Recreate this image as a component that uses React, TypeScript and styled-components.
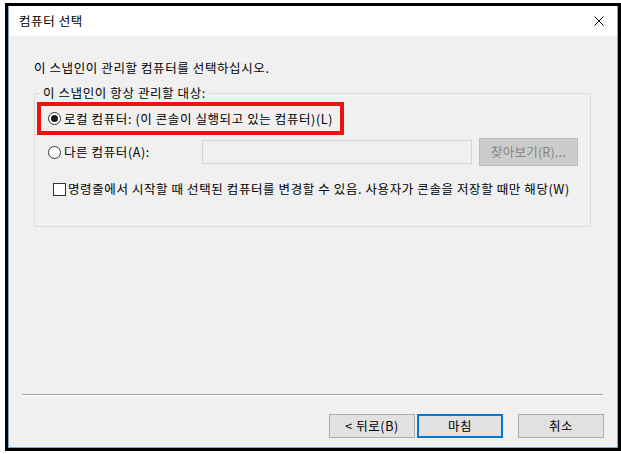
import { createGlobalStyle } from "styled-components";
import styled from "styled-components";

const GlobalStyle = createGlobalStyle`
  html, body {
    margin: 0;
    padding: 0;
    background: #ffffff;
  }
  body {
    font-family: "Noto Sans CJK KR", "Noto Sans", "Liberation Sans", sans-serif;
    font-size: 12.5px;
    letter-spacing: 0.6px;
    color: #000000;
  }
`;

const Frame = styled.div`
  margin: 3px 0 0 5px;
  width: 616px;
  height: 448px;
  box-sizing: border-box;
  border: 3px solid #000000;
  display: flex;
`;

const DialogWindow = styled.div`
  flex: 1;
  display: flex;
  flex-direction: column;
  border-left: 1px solid #7ea6d2;
  border-right: 1px solid #7ea6d2;
  border-bottom: 1px solid #7ea6d2;
  background: #ffffff;
`;

const TitleBar = styled.div`
  height: 30px;
  display: flex;
  align-items: center;
  justify-content: space-between;
  padding: 0 9px 0 10px;
  background: #ffffff;
  line-height: 16px;
`;

const CloseIcon = styled.svg`
  width: 10px;
  height: 10px;
  margin-right: 4px;
`;

const Body = styled.div`
  flex: 1;
  display: flex;
  flex-direction: column;
  background: #f0f0f0;
`;

const Content = styled.div`
  padding: 24px 26px 0 25px;
  display: flex;
  flex-direction: column;
`;

const Intro = styled.div`
  line-height: 16px;
  height: 16px;
`;

const GroupBox = styled.fieldset`
  margin: 9px 0 0 0;
  padding: 0 2px 29px 2px;
  border: 1px solid #dcdcdc;
  min-width: 0;
`;

const Legend = styled.legend`
  padding: 0 3px;
  margin-left: 3px;
  line-height: 16px;
`;

const Highlight = styled.div`
  margin-top: 1px;
  width: fit-content;
  height: 33px;
  box-sizing: border-box;
  border: 4px solid #ee1111;
  padding: 0 7px;
  display: flex;
  align-items: center;
`;

const OptionRow = styled.div<{ $indent: number; $top: number; $height: number }>`
  margin-top: ${(p) => p.$top}px;
  padding-left: ${(p) => p.$indent}px;
  height: ${(p) => p.$height}px;
  display: flex;
  align-items: center;
`;

const Radio = styled.span<{ $checked?: boolean }>`
  width: 13px;
  height: 13px;
  box-sizing: border-box;
  border-radius: 50%;
  border: 1px solid #333333;
  background: #ffffff;
  display: flex;
  align-items: center;
  justify-content: center;
  margin-right: 3px;
  flex-shrink: 0;
  &::after {
    content: "";
    display: ${(p) => (p.$checked ? "block" : "none")};
    width: 7px;
    height: 7px;
    border-radius: 50%;
    background: #1a1a1a;
  }
`;

const Checkbox = styled.span`
  width: 13px;
  height: 13px;
  box-sizing: border-box;
  border: 1px solid #333333;
  background: #ffffff;
  margin-right: 2px;
  flex-shrink: 0;
`;

const Label = styled.span<{ $width?: number }>`
  line-height: 16px;
  white-space: nowrap;
  ${(p) => (p.$width ? `width: ${p.$width}px;` : "")}
`;

const TextInput = styled.div`
  width: 270px;
  height: 24px;
  box-sizing: border-box;
  border: 1px solid #d4d4d4;
  background: #f0f0f0;
`;

const BrowseButton = styled.div`
  width: 99px;
  height: 28px;
  box-sizing: border-box;
  margin-left: 7px;
  background: #cccccc;
  border: 1px solid #bfbfbf;
  color: #838383;
  display: flex;
  align-items: center;
  justify-content: center;
  line-height: 16px;
  letter-spacing: 0.2px;
`;

const Footer = styled.div`
  margin-top: auto;
  display: flex;
  flex-direction: column;
  padding: 0 13px 9px 13px;
`;

const Separator = styled.div`
  border-top: 1px solid #a0a0a0;
  border-bottom: 1px solid #ffffff;
  margin-right: 1px;
`;

const ButtonRow = styled.div`
  margin-top: 18px;
  display: flex;
  justify-content: flex-end;
`;

const Button = styled.div<{ $default?: boolean; $gap?: number }>`
  width: 86px;
  height: 24px;
  box-sizing: border-box;
  margin-left: ${(p) => p.$gap ?? 0}px;
  background: #e1e1e1;
  border: ${(p) => (p.$default ? "2px solid #0078d7" : "1px solid #adadad")};
  display: flex;
  align-items: center;
  justify-content: center;
  line-height: 16px;
`;

export default function App() {
  return (
    <>
      <GlobalStyle />
      <Frame>
        <DialogWindow>
          <TitleBar>
            <span>컴퓨터 선택</span>
            <CloseIcon viewBox="0 0 10 10">
              <path d="M0.5 0.5 L9.5 9.5 M9.5 0.5 L0.5 9.5" stroke="#000" strokeWidth="1" fill="none" />
            </CloseIcon>
          </TitleBar>
          <Body>
            <Content>
              <Intro>이 스냅인이 관리할 컴퓨터를 선택하십시오.</Intro>
              <GroupBox>
                <Legend>이 스냅인이 항상 관리할 대상:</Legend>
                <Highlight>
                  <Radio $checked />
                  <Label>로컬 컴퓨터: (이 콘솔이 실행되고 있는 컴퓨터)(L)</Label>
                </Highlight>
                <OptionRow $indent={11} $top={3} $height={28}>
                  <Radio />
                  <Label $width={138}>다른 컴퓨터(A):</Label>
                  <TextInput />
                  <BrowseButton>찾아보기(R)...</BrowseButton>
                </OptionRow>
                <OptionRow $indent={16} $top={15} $height={16}>
                  <Checkbox />
                  <Label>
                    명령줄에서 시작할 때 선택된 컴퓨터를 변경할 수 있음. 사용자가 콘솔을 저장할 때만 해당(W)
                  </Label>
                </OptionRow>
              </GroupBox>
            </Content>
            <Footer>
              <Separator />
              <ButtonRow>
                <Button>&lt; 뒤로(B)</Button>
                <Button $default $gap={2}>마침</Button>
                <Button $gap={15}>취소</Button>
              </ButtonRow>
            </Footer>
          </Body>
        </DialogWindow>
      </Frame>
    </>
  );
}
